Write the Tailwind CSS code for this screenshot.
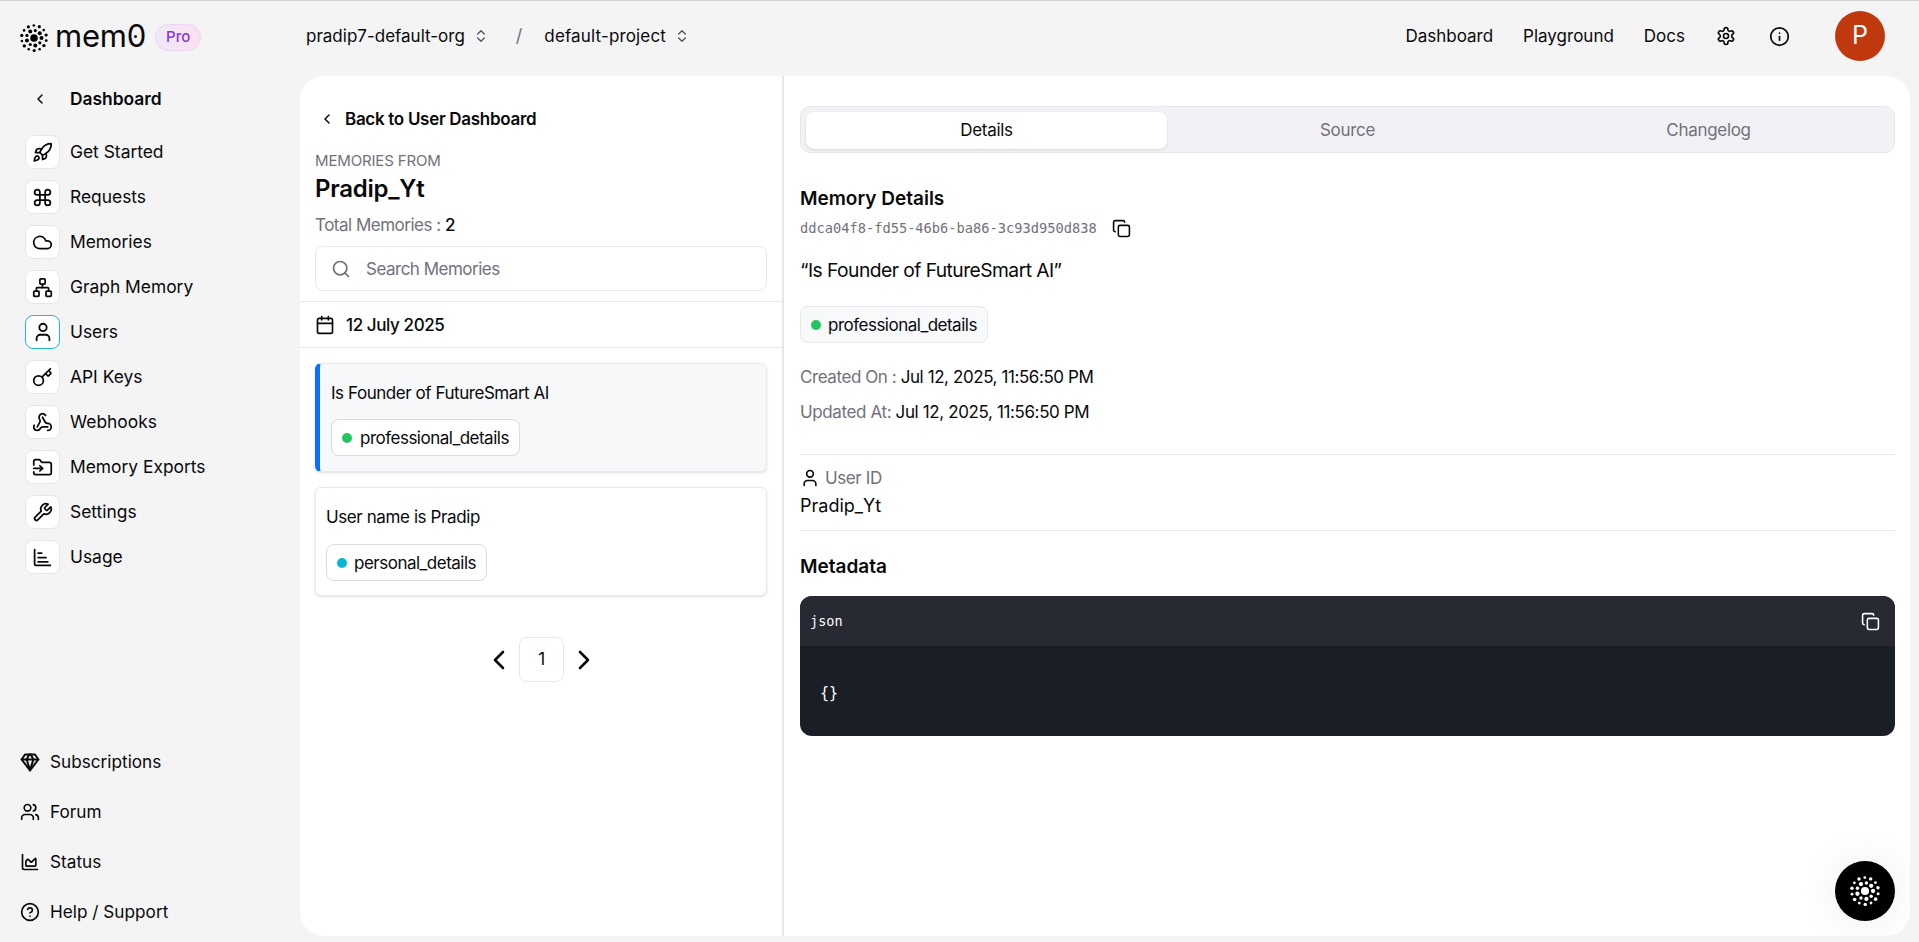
<!DOCTYPE html>
<html lang="en">
<head>
  <meta charset="UTF-8" />
  <meta name="viewport" content="width=device-width, initial-scale=1.0"/>
  <title>Memories</title>
  <script src="https://cdn.jsdelivr.net/npm/@tailwindcss/browser@4"></script>
</head>
<body class="h-screen overflow-hidden bg-[#f4f4f5] text-[#09090b] font-['Inter',sans-serif] text-base">

  <svg class="hidden">
    <symbol id="logo" viewBox="0 0 28 28">
      <circle cx="14" cy="14" r="3.8"/>
      <circle cx="21.5" cy="14" r="2"/><circle cx="19.75" cy="18.82" r="1.6"/><circle cx="15.3" cy="21.39" r="2"/><circle cx="10.25" cy="20.5" r="1.6"/><circle cx="6.95" cy="16.57" r="2"/><circle cx="6.95" cy="11.43" r="1.6"/><circle cx="10.25" cy="7.5" r="2"/><circle cx="15.3" cy="6.61" r="1.6"/><circle cx="19.75" cy="9.18" r="2"/>
      <circle cx="26.2" cy="16.6" r="1.4"/><circle cx="23.9" cy="21.6" r="1.7"/><circle cx="19.6" cy="25.2" r="1.3"/><circle cx="14.2" cy="26.5" r="1.6"/><circle cx="8.7" cy="25.3" r="1.3"/><circle cx="4.3" cy="21.9" r="1.7"/><circle cx="1.9" cy="17" r="1.3"/><circle cx="1.8" cy="11.4" r="1.6"/><circle cx="4.1" cy="6.4" r="1.3"/><circle cx="8.4" cy="2.8" r="1.6"/><circle cx="13.8" cy="1.5" r="1.3"/><circle cx="19.3" cy="2.7" r="1.6"/><circle cx="23.7" cy="6.1" r="1.3"/><circle cx="26.1" cy="11" r="1.6"/>
    </symbol>
    <symbol id="copy" viewBox="0 0 24 24" fill="none" stroke="currentColor" stroke-width="2" stroke-linecap="round" stroke-linejoin="round">
      <rect width="14" height="14" x="8" y="8" rx="2"/><path d="M4 16c-1.1 0-2-.9-2-2V4c0-1.1.9-2 2-2h10c1.1 0 2 .9 2 2"/>
    </symbol>
  </svg>

  <div class="h-px bg-[#cfcfcf]"></div>

  <!-- Top bar -->
  <header class="h-[75px] flex items-center pl-5 pr-[34px] pb-[5px] text-[17px]">
    <div class="w-[286px] flex items-center">
      <svg class="w-7 h-7 text-black mt-[3px]" fill="currentColor"><use href="#logo"/></svg>
      <div class="relative ml-[7px] text-[31px] leading-none -mt-px tracking-[-0.2px]">mem0
        <span class="absolute right-[9px] top-[15px] w-[3px] h-[3px] rounded-full bg-[#09090b]"></span>
      </div>
      <span class="ml-[9px] mt-[3px] w-[46px] h-[27px] rounded-full border border-[#e9d5f7] bg-gradient-to-r from-[#f0e9fb] to-[#f9e0ef] text-[#8a35d6] text-[15px] font-medium flex items-center justify-center">Pro</span>
    </div>
    <div class="flex items-center gap-2">
      <span class="pt-[2px]">pradip7-default-org</span>
      <svg class="w-4 h-4 text-[#52525b]" viewBox="0 0 24 24" fill="none" stroke="currentColor" stroke-width="2" stroke-linecap="round" stroke-linejoin="round"><path d="m7 15 5 5 5-5"/><path d="m7 9 5-5 5 5"/></svg>
    </div>
    <span class="ml-[27px] mr-[22px] text-[#71717a] text-lg">/</span>
    <div class="flex items-center gap-2">
      <span class="pt-[2px] tracking-[0.15px]">default-project</span>
      <svg class="w-4 h-4 text-[#52525b]" viewBox="0 0 24 24" fill="none" stroke="currentColor" stroke-width="2" stroke-linecap="round" stroke-linejoin="round"><path d="m7 15 5 5 5-5"/><path d="m7 9 5-5 5 5"/></svg>
    </div>
    <nav class="ml-auto flex items-center gap-[30px] pt-[2px]">
      <span>Dashboard</span>
      <span>Playground</span>
      <span>Docs</span>
    </nav>
    <svg class="ml-[31px] w-5 h-5" viewBox="0 0 24 24" fill="none" stroke="currentColor" stroke-width="2" stroke-linecap="round" stroke-linejoin="round"><path d="M12.22 2h-.44a2 2 0 0 0-2 2v.18a2 2 0 0 1-1 1.73l-.43.25a2 2 0 0 1-2 0l-.15-.08a2 2 0 0 0-2.73.73l-.22.38a2 2 0 0 0 .73 2.73l.15.1a2 2 0 0 1 1 1.72v.51a2 2 0 0 1-1 1.74l-.15.09a2 2 0 0 0-.73 2.73l.22.38a2 2 0 0 0 2.73.73l.15-.08a2 2 0 0 1 2 0l.43.25a2 2 0 0 1 1 1.73V20a2 2 0 0 0 2 2h.44a2 2 0 0 0 2-2v-.18a2 2 0 0 1 1-1.73l.43-.25a2 2 0 0 1 2 0l.15.08a2 2 0 0 0 2.73-.73l.22-.39a2 2 0 0 0-.73-2.73l-.15-.08a2 2 0 0 1-1-1.74v-.5a2 2 0 0 1 1-1.74l.15-.09a2 2 0 0 0 .73-2.73l-.22-.38a2 2 0 0 0-2.73-.73l-.15.08a2 2 0 0 1-2 0l-.43-.25a2 2 0 0 1-1-1.73V4a2 2 0 0 0-2-2z"/><circle cx="12" cy="12" r="3"/></svg>
    <svg class="ml-[33px] w-[21px] h-[21px]" viewBox="0 0 24 24" fill="none" stroke="currentColor" stroke-width="2" stroke-linecap="round" stroke-linejoin="round"><circle cx="12" cy="12" r="10"/><path d="M12 16v-4"/><path d="M12 8h.01"/></svg>
    <div class="ml-[45px] w-[50px] h-[50px] rounded-full bg-[#c0390e] text-white text-[25px] flex items-center justify-center">P</div>
  </header>

  <div class="flex h-[866px]">
    <!-- Sidebar -->
    <aside class="w-[300px] shrink-0 flex flex-col pb-[18px] text-[17.4px]">
      <div class="flex items-center h-6 mt-[11px] mb-6 pl-[32px] gap-[22px]">
        <svg class="w-4 h-4" viewBox="0 0 24 24" fill="none" stroke="currentColor" stroke-width="2.2" stroke-linecap="round" stroke-linejoin="round"><path d="m15 18-6-6 6-6"/></svg>
        <span class="font-semibold">Dashboard</span>
      </div>
      <ul class="flex flex-col gap-[11px] pl-[25px]">
        <li class="flex items-center gap-[10px]">
          <span class="w-[35px] h-[34px] rounded-lg bg-white border border-[#e7e7e9] flex items-center justify-center"><svg class="w-[21px] h-[21px]" viewBox="0 0 24 24" fill="none" stroke="currentColor" stroke-width="2" stroke-linecap="round" stroke-linejoin="round"><path d="M4.5 16.5c-1.5 1.26-2 5-2 5s3.74-.5 5-2c.71-.84.7-2.13-.09-2.91a2.18 2.18 0 0 0-2.91-.09z"/><path d="m12 15-3-3a22 22 0 0 1 2-3.95A12.88 12.88 0 0 1 22 2c0 2.72-.78 7.5-6 11a22.35 22.35 0 0 1-4 2z"/><path d="M9 12H4s.55-3.03 2-4c1.62-1.08 5 0 5 0"/><path d="M12 15v5s3.03-.55 4-2c1.08-1.62 0-5 0-5"/></svg></span>
          <span class="pt-px">Get Started</span>
        </li>
        <li class="flex items-center gap-[10px]">
          <span class="w-[35px] h-[34px] rounded-lg bg-white border border-[#e7e7e9] flex items-center justify-center"><svg class="w-[21px] h-[21px]" viewBox="0 0 24 24" fill="none" stroke="currentColor" stroke-width="2" stroke-linecap="round" stroke-linejoin="round"><path d="M15 6v12a3 3 0 1 0 3-3H6a3 3 0 1 0 3 3V6a3 3 0 1 0-3 3h12a3 3 0 1 0-3-3"/></svg></span>
          <span class="pt-px">Requests</span>
        </li>
        <li class="flex items-center gap-[10px]">
          <span class="w-[35px] h-[34px] rounded-lg bg-white border border-[#e7e7e9] flex items-center justify-center"><svg class="w-[21px] h-[21px]" viewBox="0 0 24 24" fill="none" stroke="currentColor" stroke-width="2" stroke-linecap="round" stroke-linejoin="round"><path d="M17.5 19H9a7 7 0 1 1 6.71-9h1.79a4.5 4.5 0 1 1 0 9Z"/></svg></span>
          <span class="pt-px">Memories</span>
        </li>
        <li class="flex items-center gap-[10px]">
          <span class="w-[35px] h-[34px] rounded-lg bg-white border border-[#e7e7e9] flex items-center justify-center"><svg class="w-[21px] h-[21px]" viewBox="0 0 24 24" fill="none" stroke="currentColor" stroke-width="2" stroke-linecap="round" stroke-linejoin="round"><rect x="16" y="16" width="6" height="6" rx="1"/><rect x="2" y="16" width="6" height="6" rx="1"/><rect x="9" y="2" width="6" height="6" rx="1"/><path d="M5 16v-3a1 1 0 0 1 1-1h12a1 1 0 0 1 1 1v3"/><path d="M12 12V8"/></svg></span>
          <span class="pt-px">Graph Memory</span>
        </li>
        <li class="flex items-center gap-[10px]">
          <span class="w-[35px] h-[34px] rounded-lg bg-white border border-[#22b8d6] flex items-center justify-center"><svg class="w-[22px] h-[22px]" viewBox="0 0 24 24" fill="none" stroke="currentColor" stroke-width="2" stroke-linecap="round" stroke-linejoin="round"><path d="M8 7a4 4 0 1 0 8 0a4 4 0 0 0 -8 0"/><path d="M5 21v-2a4 4 0 0 1 4 -4h6a4 4 0 0 1 4 4v2"/></svg></span>
          <span class="pt-px">Users</span>
        </li>
        <li class="flex items-center gap-[10px]">
          <span class="w-[35px] h-[34px] rounded-lg bg-white border border-[#e7e7e9] flex items-center justify-center"><svg class="w-[21px] h-[21px]" viewBox="0 0 24 24" fill="none" stroke="currentColor" stroke-width="2" stroke-linecap="round" stroke-linejoin="round"><path d="m15.5 7.5 2.3 2.3a1 1 0 0 0 1.4 0l2.1-2.1a1 1 0 0 0 0-1.4L19 4"/><path d="m21 2-9.6 9.6"/><circle cx="7.5" cy="15.5" r="5.5"/></svg></span>
          <span class="pt-px">API Keys</span>
        </li>
        <li class="flex items-center gap-[10px]">
          <span class="w-[35px] h-[34px] rounded-lg bg-white border border-[#e7e7e9] flex items-center justify-center"><svg class="w-[21px] h-[21px]" viewBox="0 0 24 24" fill="none" stroke="currentColor" stroke-width="2" stroke-linecap="round" stroke-linejoin="round"><path d="M18 16.98h-5.99c-1.1 0-1.95.94-2.48 1.9A4 4 0 0 1 2 17c.01-.7.2-1.4.57-2"/><path d="m6 17 3.13-5.78c.53-.97.1-2.18-.5-3.1a4 4 0 1 1 6.89-4.06"/><path d="m12 6 3.13 5.73C15.66 12.7 16.9 13 18 13a4 4 0 0 1 0 8"/></svg></span>
          <span class="pt-px">Webhooks</span>
        </li>
        <li class="flex items-center gap-[10px]">
          <span class="w-[35px] h-[34px] rounded-lg bg-white border border-[#e7e7e9] flex items-center justify-center"><svg class="w-[21px] h-[21px]" viewBox="0 0 24 24" fill="none" stroke="currentColor" stroke-width="2" stroke-linecap="round" stroke-linejoin="round"><path d="M2 9V5a2 2 0 0 1 2-2h3.9a2 2 0 0 1 1.69.9l.81 1.2a2 2 0 0 0 1.67.9H20a2 2 0 0 1 2 2v10a2 2 0 0 1-2 2H4a2 2 0 0 1-2-2v-1"/><path d="M2 13h10"/><path d="m9 16 3-3-3-3"/></svg></span>
          <span class="pt-px">Memory Exports</span>
        </li>
        <li class="flex items-center gap-[10px]">
          <span class="w-[35px] h-[34px] rounded-lg bg-white border border-[#e7e7e9] flex items-center justify-center"><svg class="w-[21px] h-[21px]" viewBox="0 0 24 24" fill="none" stroke="currentColor" stroke-width="2" stroke-linecap="round" stroke-linejoin="round"><path d="M14.7 6.3a1 1 0 0 0 0 1.4l1.6 1.6a1 1 0 0 0 1.4 0l3.77-3.77a6 6 0 0 1-7.94 7.94l-6.91 6.91a2.12 2.12 0 0 1-3-3l6.91-6.91a6 6 0 0 1 7.94-7.94l-3.76 3.76z"/></svg></span>
          <span class="pt-px">Settings</span>
        </li>
        <li class="flex items-center gap-[10px]">
          <span class="w-[35px] h-[34px] rounded-lg bg-white border border-[#e7e7e9] flex items-center justify-center"><svg class="w-[21px] h-[21px]" viewBox="0 0 24 24" fill="none" stroke="currentColor" stroke-width="2" stroke-linecap="round" stroke-linejoin="round"><path d="M3 3v16a2 2 0 0 0 2 2h16"/><path d="M7 7h4"/><path d="M7 12h9"/><path d="M7 17h11"/></svg></span>
          <span class="pt-px">Usage</span>
        </li>
      </ul>
      <ul class="mt-auto flex flex-col gap-[26px] pl-5 text-[17.2px]">
        <li class="flex items-center gap-[10px] h-6">
          <svg class="w-5 h-5" viewBox="0 0 24 24" fill="none" stroke="currentColor" stroke-width="2.4" stroke-linecap="round" stroke-linejoin="round"><path d="M6 3h12l4 6-10 13L2 9Z"/><path d="M11 3 8 9l4 13 4-13-3-6"/><path d="M2 9h20"/></svg>
          Subscriptions
        </li>
        <li class="flex items-center gap-[10px] h-6">
          <svg class="w-5 h-5" viewBox="0 0 24 24" fill="none" stroke="currentColor" stroke-width="2" stroke-linecap="round" stroke-linejoin="round"><path d="M16 21v-2a4 4 0 0 0-4-4H6a4 4 0 0 0-4 4v2"/><circle cx="9" cy="7" r="4"/><path d="M22 21v-2a4 4 0 0 0-3-3.87"/><path d="M16 3.13a4 4 0 0 1 0 7.75"/></svg>
          Forum
        </li>
        <li class="flex items-center gap-[10px] h-6">
          <svg class="w-5 h-5" viewBox="0 0 24 24" fill="none" stroke="currentColor" stroke-width="2" stroke-linecap="round" stroke-linejoin="round"><path d="M3 3v16a2 2 0 0 0 2 2h16"/><path d="M7 11.207a.5.5 0 0 1 .146-.353l2-2a.5.5 0 0 1 .708 0l3.292 3.292a.5.5 0 0 0 .708 0l4.292-4.292a.5.5 0 0 1 .854.353V16a1 1 0 0 1-1 1H8a1 1 0 0 1-1-1z"/></svg>
          Status
        </li>
        <li class="flex items-center gap-[10px] h-6">
          <svg class="w-5 h-5" viewBox="0 0 24 24" fill="none" stroke="currentColor" stroke-width="2" stroke-linecap="round" stroke-linejoin="round"><circle cx="12" cy="12" r="10"/><path d="M9.09 9a3 3 0 0 1 5.83 1c0 2-3 3-3 3"/><path d="M12 17h.01"/></svg>
          Help / Support
        </li>
      </ul>
    </aside>

    <!-- Panel -->
    <main class="relative w-[1610px] h-[860px] bg-white rounded-[24px] flex overflow-hidden text-[17px] tracking-[-0.4px]">
      <!-- Memory list -->
      <section class="w-[484px] shrink-0 border-r-2 border-[#e5e7eb]">
        <div class="px-[15px]">
          <div class="flex items-center h-6 mt-[31px] gap-[10px] pl-[4px]">
            <svg class="w-[16px] h-[16px]" viewBox="0 0 24 24" fill="none" stroke="currentColor" stroke-width="2.2" stroke-linecap="round" stroke-linejoin="round"><path d="m15 18-6-6 6-6"/></svg>
            <span class="pt-[2px] font-semibold tracking-[-0.3px]">Back to User Dashboard</span>
          </div>
          <p class="mt-5 text-[15px] tracking-[-0.15px] leading-5 text-[#71717a]">MEMORIES FROM</p>
          <h1 class="mt-[2px] text-2xl leading-8 font-semibold tracking-[-0.25px]">Pradip_Yt</h1>
          <p class="mt-[8px] leading-6 text-[#71717a] tracking-[-0.5px]">Total Memories : <span class="font-medium text-[#09090b]">2</span></p>
          <div class="mt-[9px] h-[45px] rounded-lg border border-[#e5e7eb] flex items-center pl-[15px] gap-[15px] text-[#71717a] tracking-[-0.5px]">
            <svg class="w-5 h-5" viewBox="0 0 24 24" fill="none" stroke="currentColor" stroke-width="2" stroke-linecap="round" stroke-linejoin="round"><circle cx="11" cy="11" r="8"/><path d="m21 21-4.3-4.3"/></svg>
            <span class="pt-[2px]">Search Memories</span>
          </div>
        </div>
        <div class="mt-[10px] h-[47px] border-y border-[#e5e7eb] flex items-center px-[15px] gap-[11px]">
          <svg class="w-5 h-5" viewBox="0 0 24 24" fill="none" stroke="currentColor" stroke-width="2" stroke-linecap="round" stroke-linejoin="round"><path d="M8 2v4"/><path d="M16 2v4"/><rect width="18" height="18" x="3" y="4" rx="2"/><path d="M3 10h18"/></svg>
          <span class="pt-[2px] font-medium">12 July 2025</span>
        </div>
        <div class="px-[15px] pt-[15px] flex flex-col gap-[15px]">
          <div class="h-[109px] rounded-md bg-[#f7f8fa] border border-[#e8eaee] border-l-[5px] border-l-[#0a6fff] shadow-sm pl-[11px] pt-[17px]">
            <p class="leading-6 tracking-[-0.45px]">Is Founder of FutureSmart AI</p>
            <span class="mt-[14px] inline-flex items-center h-[37px] px-[10px] gap-[8px] rounded-lg border border-[#d9dce2] bg-white tracking-[-0.5px]"><i class="w-[10px] h-[10px] rounded-full bg-[#22c55e]"></i><span class="pt-[2px]">professional_details</span></span>
          </div>
          <div class="h-[109px] rounded-md bg-white border border-[#e8eaee] shadow-sm pl-[10px] pt-[17px]">
            <p class="leading-6">User name is Pradip</p>
            <span class="mt-[15px] inline-flex items-center h-[37px] px-[10px] gap-[7px] rounded-lg border border-[#d9dce2] bg-white tracking-[-0.5px]"><i class="w-[10px] h-[10px] rounded-full bg-[#06b6d4]"></i><span class="pt-[2px]">personal_details</span></span>
          </div>
        </div>
        <div class="mt-[41px] flex items-center justify-center gap-[14px] pl-px">
          <svg class="w-3 h-5" viewBox="0 0 12 20" fill="none" stroke="currentColor" stroke-width="2.6" stroke-linecap="round" stroke-linejoin="round"><path d="M10 2 2 10l8 8"/></svg>
          <span class="w-[45px] h-[45px] rounded-lg border border-[#e5e7eb] flex items-center justify-center">1</span>
          <svg class="w-3 h-5" viewBox="0 0 12 20" fill="none" stroke="currentColor" stroke-width="2.6" stroke-linecap="round" stroke-linejoin="round"><path d="m2 2 8 8-8 8"/></svg>
        </div>
      </section>

      <!-- Memory details -->
      <section class="flex-1 pl-4 pr-[15px] pt-[30px]">
        <div class="h-[47px] rounded-[10px] bg-[#f1f1f6] border border-[#e5e7eb] p-[5px] grid grid-cols-3 text-[#71717a] text-center leading-[37px] tracking-[-0.3px]">
          <div class="rounded-lg bg-white shadow-sm text-[#09090b]">Details</div>
          <div>Source</div>
          <div>Changelog</div>
        </div>
        <h2 class="mt-[34px] text-[19px] tracking-normal leading-6 font-semibold">Memory Details</h2>
        <div class="mt-[5px] flex items-center gap-[15px] tracking-normal">
          <span class="font-['DejaVu_Sans_Mono',monospace] text-[13.7px] leading-6 text-[#71717a]">ddca04f8-fd55-46b6-ba86-3c93d950d838</span>
          <svg class="w-[19px] h-[19px]"><use href="#copy"/></svg>
        </div>
        <p class="mt-[16px] text-[19.25px] tracking-[-0.55px] leading-7">“Is Founder of FutureSmart AI”</p>
        <span class="mt-[22px] inline-flex items-center h-[37px] px-[10px] gap-[7px] rounded-lg border border-[#e5e7eb] bg-[#f8f9fb] tracking-[-0.5px]"><i class="w-[10px] h-[10px] rounded-full bg-[#22c55e]"></i><span class="pt-[2px]">professional_details</span></span>
        <p class="mt-[22px] leading-6 tracking-[-0.42px]"><span class="text-[#71717a]">Created On : </span>Jul 12, 2025, 11:56:50 PM</p>
        <p class="mt-[11px] leading-6 tracking-[-0.38px]"><span class="text-[#71717a]">Updated At: </span>Jul 12, 2025, 11:56:50 PM</p>
        <div class="mt-[30px] h-[77px] border-y border-[#e5e7eb] pt-[11px]">
          <div class="flex items-center gap-[5px] leading-6 text-[#71717a]">
            <svg class="w-5 h-5 text-[#09090b]" viewBox="0 0 24 24" fill="none" stroke="currentColor" stroke-width="2" stroke-linecap="round" stroke-linejoin="round"><path d="M8 7a4 4 0 1 0 8 0a4 4 0 0 0 -8 0"/><path d="M5 21v-2a4 4 0 0 1 4 -4h6a4 4 0 0 1 4 4v2"/></svg>
            User ID
          </div>
          <p class="mt-[4px] text-lg tracking-normal leading-6">Pradip_Yt</p>
        </div>
        <h2 class="mt-[24px] text-[19px] tracking-normal leading-6 font-semibold">Metadata</h2>
        <div class="mt-[17px] h-[140px] rounded-xl overflow-hidden bg-[#1a1e27] font-['DejaVu_Sans_Mono',monospace] text-white tracking-normal">
          <div class="h-[50px] bg-[#272a32] flex items-center justify-between pl-[10px] pr-[15px] text-[13.5px]">
            json
            <svg class="w-[19px] h-[19px]"><use href="#copy"/></svg>
          </div>
          <div class="pl-5 pt-[35px] text-[15px] leading-[24px]">{}</div>
        </div>
      </section>

      <button class="absolute right-[15px] bottom-[15px] w-[60px] h-[60px] rounded-full bg-black text-white shadow-[0_0_40px_rgba(0,0,0,0.08)] flex items-center justify-center">
        <svg class="w-[30px] h-[30px]" fill="currentColor"><use href="#logo"/></svg>
      </button>
    </main>
  </div>
</body>
</html>
